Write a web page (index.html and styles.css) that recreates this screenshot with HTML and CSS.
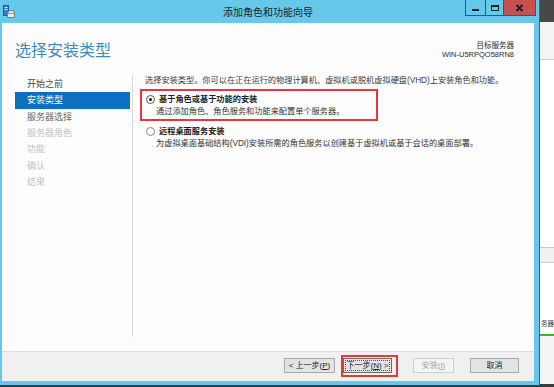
FILE: index.html
```html
<!DOCTYPE html>
<html lang="zh-CN">
<head>
    <meta charset="UTF-8">
    <title>添加角色和功能向导</title>
    <link rel="stylesheet" href="styles.css">
</head>
<body>
    <div class="screen">
        <div class="window">
            <div class="titlebar">
                <svg class="app-icon" width="12" height="13" viewBox="0 0 12 13">
                    <rect x="0.5" y="0.5" width="5" height="10" fill="#2f7fd0" stroke="#1d5c9e"/>
                    <rect x="1.5" y="2" width="3" height="1" fill="#cfe6fb"/>
                    <rect x="1.5" y="4" width="3" height="1" fill="#cfe6fb"/>
                    <path d="M4.5 8 L6.5 5.5 H10 L11.5 8 V12.5 H4.5 Z" fill="#e8e8e8" stroke="#7d7d7d"/>
                    <path d="M5 8.5 H11" stroke="#9a9a9a"/>
                </svg>
                <span class="title">添加角色和功能向导</span>
                <div class="caption-btns">
                    <span class="cap min"><i></i></span>
                    <span class="cap max"><i></i></span>
                    <span class="cap close">
                        <svg width="9" height="8" viewBox="0 0 9 8"><path d="M1.5 1 L7.5 7 M7.5 1 L1.5 7" stroke="#1e1e1e" stroke-width="1.8"/></svg>
                    </span>
                </div>
            </div>

            <div class="client">
                <div class="wizard-head">
                    <h1>选择安装类型</h1>
                    <div class="target">目标服务器<br>WIN-U5RPQO58RN8</div>
                </div>

                <div class="wizard-main">
                    <ul class="steps">
                        <li class="done">开始之前</li>
                        <li class="active">安装类型</li>
                        <li class="next">服务器选择</li>
                        <li>服务器角色</li>
                        <li>功能</li>
                        <li>确认</li>
                        <li>结果</li>
                    </ul>

                    <div class="page">
                        <p class="intro">选择安装类型。你可以在正在运行的物理计算机、虚拟机或脱机虚拟硬盘(VHD)上安装角色和功能。</p>

                        <div class="option marked">
                            <div class="option-label"><span class="radio checked"></span>基于角色或基于功能的安装</div>
                            <div class="option-desc">通过添加角色、角色服务和功能来配置单个服务器。</div>
                        </div>

                        <div class="option">
                            <div class="option-label"><span class="radio"></span>远程桌面服务安装</div>
                            <div class="option-desc">为虚拟桌面基础结构(VDI)安装所需的角色服务以创建基于虚拟机或基于会话的桌面部署。</div>
                        </div>
                    </div>
                </div>

                <div class="footer">
                    <button class="btn prev">&lt; 上一步(<u>P</u>)</button>
                    <button class="btn next">下一步(<u>N</u>) &gt;</button>
                    <button class="btn install" disabled>安装(<u>I</u>)</button>
                    <button class="btn cancel">取消</button>
                </div>
            </div>
        </div>

        <div class="desktop-strip">
            <div class="strip-top"></div>
            <div class="strip-bar"></div>
            <div class="strip-panel"></div>
            <div class="strip-band"></div>
            <div class="strip-list"><span>务器</span></div>
            <div class="strip-rest"></div>
        </div>
    </div>
</body>
</html>
```

FILE: styles.css
```css
* {
    margin: 0;
    padding: 0;
    box-sizing: border-box;
}

body {
    width: 554px;
    height: 387px;
    overflow: hidden;
    background-color: #3c3c3c;
    font-family: 'Liberation Sans', 'Noto Sans CJK SC', sans-serif;
    color: #333333;
}

.screen {
    display: flex;
    height: 384px;
}

/* window frame */
.window {
    width: 540px;
    height: 385px;
    background-color: #66c8ea;
    border-right: 1px solid #3d6573;
    padding: 0 5px 4px 2px;
    display: flex;
    flex-direction: column;
}

.titlebar {
    height: 23px;
    display: grid;
    grid-template-columns: 1fr auto 1fr;
    align-items: center;
}

.app-icon {
    margin-left: 1px;
    margin-top: -1px;
}

.title {
    font-size: 10px;
    color: #1e1e1e;
    line-height: 23px;
    padding-top: 1px;
}

.caption-btns {
    justify-self: end;
    align-self: start;
    display: flex;
    height: 16px;
    margin-right: -2px;
    border: 1px solid #34596a;
    border-top: none;
}

.cap {
    display: flex;
    align-items: center;
    justify-content: center;
    height: 100%;
}

.cap + .cap {
    border-left: 1px solid #34596a;
}

.cap.min {
    width: 19px;
}

.cap.min i {
    display: block;
    width: 7px;
    height: 2px;
    margin-top: 5px;
    background-color: #1e1e1e;
}

.cap.max {
    width: 18px;
}

.cap.max i {
    display: block;
    width: 8px;
    height: 6px;
    border: 1px solid #1e1e1e;
    border-top-width: 2px;
}

.cap.close {
    width: 32px;
    background-color: #c75050;
}

.client {
    flex: 1;
    background-color: #fdfdfd;
    display: flex;
    flex-direction: column;
}

/* header */
.wizard-head {
    height: 52px;
    display: flex;
    justify-content: space-between;
    align-items: flex-start;
    padding: 18px 20px 0 13px;
}

.wizard-head h1 {
    font-weight: normal;
    font-size: 16px;
    line-height: 20px;
    color: #3a8cc0;
}

.target {
    font-size: 7.5px;
    line-height: 9px;
    text-align: right;
    color: #2a2a2a;
}

/* body */
.wizard-main {
    height: 276px;
    display: flex;
}

.steps {
    list-style: none;
    width: 131px;
    padding: 1px 2px 0 13px;
    margin-bottom: 14px;
    border-right: 1px solid #d9d9d9;
}

.steps li {
    height: 16.33px;
    line-height: 16.33px;
    padding-left: 12px;
    font-size: 9px;
    color: #c2c2c2;
}

.steps li.done {
    color: #4a4a4a;
}

.steps li.next {
    color: #666666;
}

.steps li.active {
    background-color: #0d6fc1;
    color: #ffffff;
}

.page {
    flex: 1;
    padding-left: 7px;
}

.intro {
    font-size: 8.2px;
    line-height: 12px;
    margin-left: 5px;
    margin-bottom: 2px;
    color: #3a3a3a;
}

.option {
    width: 238px;
    border: 2px solid transparent;
    padding: 2.5px 4px 1.5px 3px;
    white-space: nowrap;
}

.option.marked {
    border-color: #e5373c;
}

.option-label {
    display: flex;
    align-items: center;
    font-size: 8.2px;
    line-height: 12px;
    font-weight: bold;
    color: #222222;
}

.option-desc {
    font-size: 8.2px;
    line-height: 12px;
    padding-left: 11px;
    color: #333333;
}

.radio {
    width: 9px;
    height: 9px;
    margin: 0 4px 0 1px;
    border: 1px solid #8a8a8a;
    border-radius: 50%;
    background-color: #ffffff;
    display: flex;
    align-items: center;
    justify-content: center;
}

.radio.checked {
    border-color: #555555;
}

.radio.checked::after {
    content: '';
    width: 3px;
    height: 3px;
    border-radius: 50%;
    background-color: #111111;
}

/* buttons */
.footer {
    height: 30px;
    display: flex;
    justify-content: flex-end;
    align-items: flex-start;
    padding: 6px 15px 0 0;
    background-color: #f0f0f0;
    border-top: 1px solid #dedede;
}

.btn {
    height: 15px;
    font-family: 'Liberation Sans', 'Noto Sans CJK SC', sans-serif;
    font-size: 8px;
    line-height: 13px;
    color: #222222;
    background-color: #e3e3e3;
    border: 1px solid #a9a9a9;
}

.btn u {
    text-decoration-thickness: 1px;
}

.btn.prev {
    width: 51px;
}

.btn.next {
    width: 49px;
    margin-left: 8px;
    position: relative;
    border-color: #6b6b6b;
    outline: 1px dotted #555555;
    outline-offset: -3px;
}

.btn.next::after {
    content: '';
    position: absolute;
    top: -4px;
    left: -3px;
    right: -7px;
    bottom: -5px;
    border: 2px solid #e5373c;
}

.btn.install {
    width: 41px;
    margin-left: 21px;
    color: #a3a3a3;
    background-color: #f4f4f4;
    border-color: #cfcfcf;
}

.btn.cancel {
    width: 49px;
    margin-left: 16px;
}

/* desktop behind the window */
.desktop-strip {
    flex: 1;
    display: flex;
    flex-direction: column;
    overflow: hidden;
}

.strip-top {
    height: 22px;
    background-color: #474747;
}

.strip-bar {
    height: 38px;
    background-color: #f4f4f4;
    border-bottom: 1px solid #cdcdcd;
}

.strip-panel {
    height: 188px;
    background-color: #ffffff;
    border-bottom: 1px solid #c8c8c8;
}

.strip-band {
    height: 15px;
    background-color: #f1f1f1;
    border-bottom: 1px solid #cccccc;
}

.strip-list {
    height: 73px;
    background-color: #ffffff;
    border-bottom: 2px solid #35b93a;
    display: flex;
    justify-content: flex-end;
    align-items: flex-end;
    padding-bottom: 5px;
}

.strip-list span {
    font-size: 6.5px;
    line-height: 10px;
    color: #333333;
    white-space: nowrap;
}

.strip-rest {
    flex: 1;
    background-color: #f5f5f5;
}
```
